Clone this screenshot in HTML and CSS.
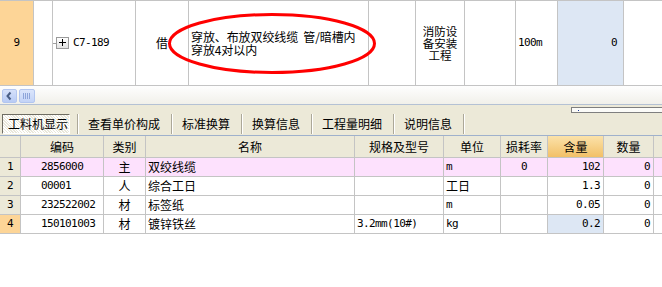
FILE: index.html
```html
<!DOCTYPE html>
<html lang="zh-CN">
<head>
  <meta charset="UTF-8" />
  <title>工料机显示</title>
  <link rel="stylesheet" href="styles.css">
</head>
<body>
  <div class="page">

    <!-- upper grid: the quota row -->
    <div class="top-grid">
      <div class="cell sel center m">9</div>
      <div class="cell"></div>
      <div class="cell code">
        <span class="tree-line"></span>
        <span class="expander"><svg width="11" height="10" viewBox="0 0 11 10"><path d="M2 4.5H9M5.5 1V8" stroke="#000" stroke-width="1" fill="none"/></svg></span>
        <span class="m code-text">C7-189</span>
      </div>
      <div class="cell center">借</div>
      <div class="cell desc">穿放、布放双绞线缆&nbsp;&nbsp;管/暗槽内<br>穿放4对以内</div>
      <div class="cell"></div>
      <div class="cell center tight">消防设<br>备安装<br>工程</div>
      <div class="cell"></div>
      <div class="cell m">100m</div>
      <div class="cell m right hl">0</div>
      <div class="cell"></div>
    </div>

    <!-- red annotation ring over the description -->
    <svg class="mark" width="662" height="86" viewBox="0 0 662 86">
      <ellipse cx="272" cy="43.5" rx="102.5" ry="29" fill="none" stroke="#f00" stroke-width="3"/>
    </svg>

    <div class="hscroll">
      <span class="sb-btn">
        <svg width="13" height="12" viewBox="0 0 13 12"><polyline points="7.5,2.5 4.5,6 7.5,9.5" fill="none" stroke="#4a5f86" stroke-width="2"/></svg>
      </span>
      <span class="sb-thumb">
        <svg width="14" height="12" viewBox="0 0 14 12"><path d="M3.5 3V9M5.5 3V9M7.5 3V9M9.5 3V9" stroke="#8ea5d9" stroke-width="1"/></svg>
      </span>
    </div>

    <div class="tabbar">
      <span class="tab active">工料机显示</span>
      <span class="sep"></span>
      <span class="tab">查看单价构成</span>
      <span class="sep"></span>
      <span class="tab">标准换算</span>
      <span class="sep"></span>
      <span class="tab">换算信息</span>
      <span class="sep"></span>
      <span class="tab">工程量明细</span>
      <span class="sep"></span>
      <span class="tab">说明信息</span>
      <span class="sep"></span>
      <span class="mini-bar"><span class="dot"></span></span>
    </div>

    <!-- lower grid: labour / material / machine -->
    <div class="grid">
      <div class="hd"></div>
      <div class="hd">编码</div>
      <div class="hd">类别</div>
      <div class="hd">名称</div>
      <div class="hd">规格及型号</div>
      <div class="hd">单位</div>
      <div class="hd">损耗率</div>
      <div class="hd hd-on">含量</div>
      <div class="hd">数量</div>
      <div class="hd"></div>

      <div class="no m">1</div>
      <div class="pink m code-col">2856000</div>
      <div class="pink center">主</div>
      <div class="pink">双绞线缆</div>
      <div class="pink"></div>
      <div class="pink m">m</div>
      <div class="pink m center">0</div>
      <div class="pink m right">102</div>
      <div class="pink m right">0</div>
      <div class="pink"></div>

      <div class="no m">2</div>
      <div class="m code-col">00001</div>
      <div class="center">人</div>
      <div>综合工日</div>
      <div></div>
      <div>工日</div>
      <div></div>
      <div class="m right">1.3</div>
      <div class="m right">0</div>
      <div></div>

      <div class="no m">3</div>
      <div class="m code-col">232522002</div>
      <div class="center">材</div>
      <div>标签纸</div>
      <div></div>
      <div class="m">m</div>
      <div></div>
      <div class="m right">0.05</div>
      <div class="m right">0</div>
      <div></div>

      <div class="no sel m">4</div>
      <div class="m code-col">150101003</div>
      <div class="center">材</div>
      <div>镀锌铁丝</div>
      <div class="m">3.2mm(10#)</div>
      <div class="m">kg</div>
      <div></div>
      <div class="m right hl">0.2</div>
      <div class="m right">0</div>
      <div></div>
    </div>

  </div>
</body>
</html>
```

FILE: styles.css
```css
body {
  margin: 0;
  background: #fff;
  color: #000;
  font-family: "Noto Sans CJK SC", "DejaVu Sans", sans-serif;
  font-size: 12px;
  overflow: hidden;
}

.page {
  position: relative;
  width: 662px;
  height: 287px;
  overflow: hidden;
}

.m {
  font-family: "DejaVu Sans Mono", monospace;
  font-size: 11px;
  letter-spacing: -0.6px;
}

.center {
  justify-content: center;
  text-align: center;
}

.right {
  justify-content: flex-end;
}

.sel {
  background: #fdd597 !important;
}

.hl {
  background: #dde7f4 !important;
}

/* upper grid */

.top-grid {
  display: grid;
  grid-template-columns: 33px 18px 82px 52px 179px 46px 48px 50px 41px 65px 1fr;
  grid-template-rows: 84px;
  gap: 1px;
  padding: 1px 0;
  background: #c4c4c4;
}

.cell {
  display: flex;
  align-items: center;
  background: #fff;
  padding: 0 2px;
  line-height: 12px;
}

.cell.right {
  padding-right: 6px;
}

.code {
  padding: 0;
}

.tree-line {
  width: 3px;
  height: 1px;
  background: #a0a0a0;
}

.expander {
  display: flex;
  align-items: center;
  justify-content: center;
  box-sizing: border-box;
  width: 13px;
  height: 12px;
  border: 1px solid #9a9a9a;
  background: linear-gradient(#fff, #e2e2e2);
}

.code-text {
  margin-left: 4px;
}

.desc {
  line-height: 13px;
  padding-left: 2px;
  white-space: nowrap;
  letter-spacing: -0.1px;
}

.tight {
  font-size: 11.5px;
  line-height: 12px;
}

.mark {
  position: absolute;
  left: 0;
  top: 0;
  pointer-events: none;
}

/* horizontal scroller */

.hscroll {
  display: flex;
  align-items: flex-start;
  gap: 2px;
  height: 18px;
  padding-left: 2px;
  background: linear-gradient(#fefefe, #f1f0ea);
  border-bottom: 1px solid #b4c1d4;
}

.sb-btn,
.sb-thumb {
  display: flex;
  align-items: center;
  justify-content: center;
  box-sizing: border-box;
  height: 14px;
  margin-top: 3px;
  border: 1px solid #b3c6ef;
  border-radius: 2px;
  background: linear-gradient(#d6e1fa, #b8cbf5);
}

.sb-btn {
  width: 15px;
}

.sb-thumb {
  width: 16px;
  background: linear-gradient(#dbe5fb, #c3d3f7);
}

/* tab strip */

.tabbar {
  display: flex;
  align-items: flex-start;
  height: 31px;
  padding-top: 9px;
  box-sizing: border-box;
  background: #ece9d8;
  border-bottom: 1px solid #9fb1cc;
}

.tab {
  padding: 0 11px 0 10px;
  line-height: 20px;
  white-space: nowrap;
}

.tab.active {
  box-sizing: border-box;
  width: 68px;
  height: 20px;
  margin: 0 7px 0 2px;
  padding: 0 0 0 5px;
  line-height: 18px;
  border: 1px solid;
  border-color: #6f6d63 #fff #fff #6f6d63;
  background-color: #f4f3ec;
  background-image: repeating-linear-gradient(45deg, #fff 0 1px, #e9e7da 1px 2px);
}

.sep {
  width: 1px;
  height: 20px;
  background: #aca899;
  box-shadow: 1px 0 0 #fff;
}

.mini-bar {
  display: flex;
  box-sizing: border-box;
  width: 95px;
  height: 6px;
  margin: -7px -4px 0 auto;
  padding: 2px 0 0 6px;
  border: 1px solid #7f7f7f;
  background: #fbfbf8;
}

.dot {
  width: 1px;
  height: 1px;
  background: #1d3c9e;
}

/* lower grid */

.grid {
  display: grid;
  grid-template-columns: 20px 82px 41px 208px 88px 56px 46px 55px 49px 1fr;
  grid-template-rows: 21px repeat(4, 18px);
  gap: 1px;
  padding-bottom: 1px;
  background: #c4c4c4;
}

.grid > div {
  display: flex;
  align-items: center;
  padding: 0 2px;
  background: #fff;
  line-height: 18px;
  white-space: nowrap;
}

.grid > .right {
  padding-right: 3px;
}

.grid > .hd {
  justify-content: center;
  background: #ece9d8;
  line-height: 21px;
}

.grid > .hd-on {
  background: linear-gradient(#fbe2aa, #f2c067);
}

.grid > .no {
  justify-content: center;
  background: #ece9d8;
}

.grid > .pink {
  background: #fde1fd;
}

.grid > .code-col {
  padding-left: 20px;
}
```
